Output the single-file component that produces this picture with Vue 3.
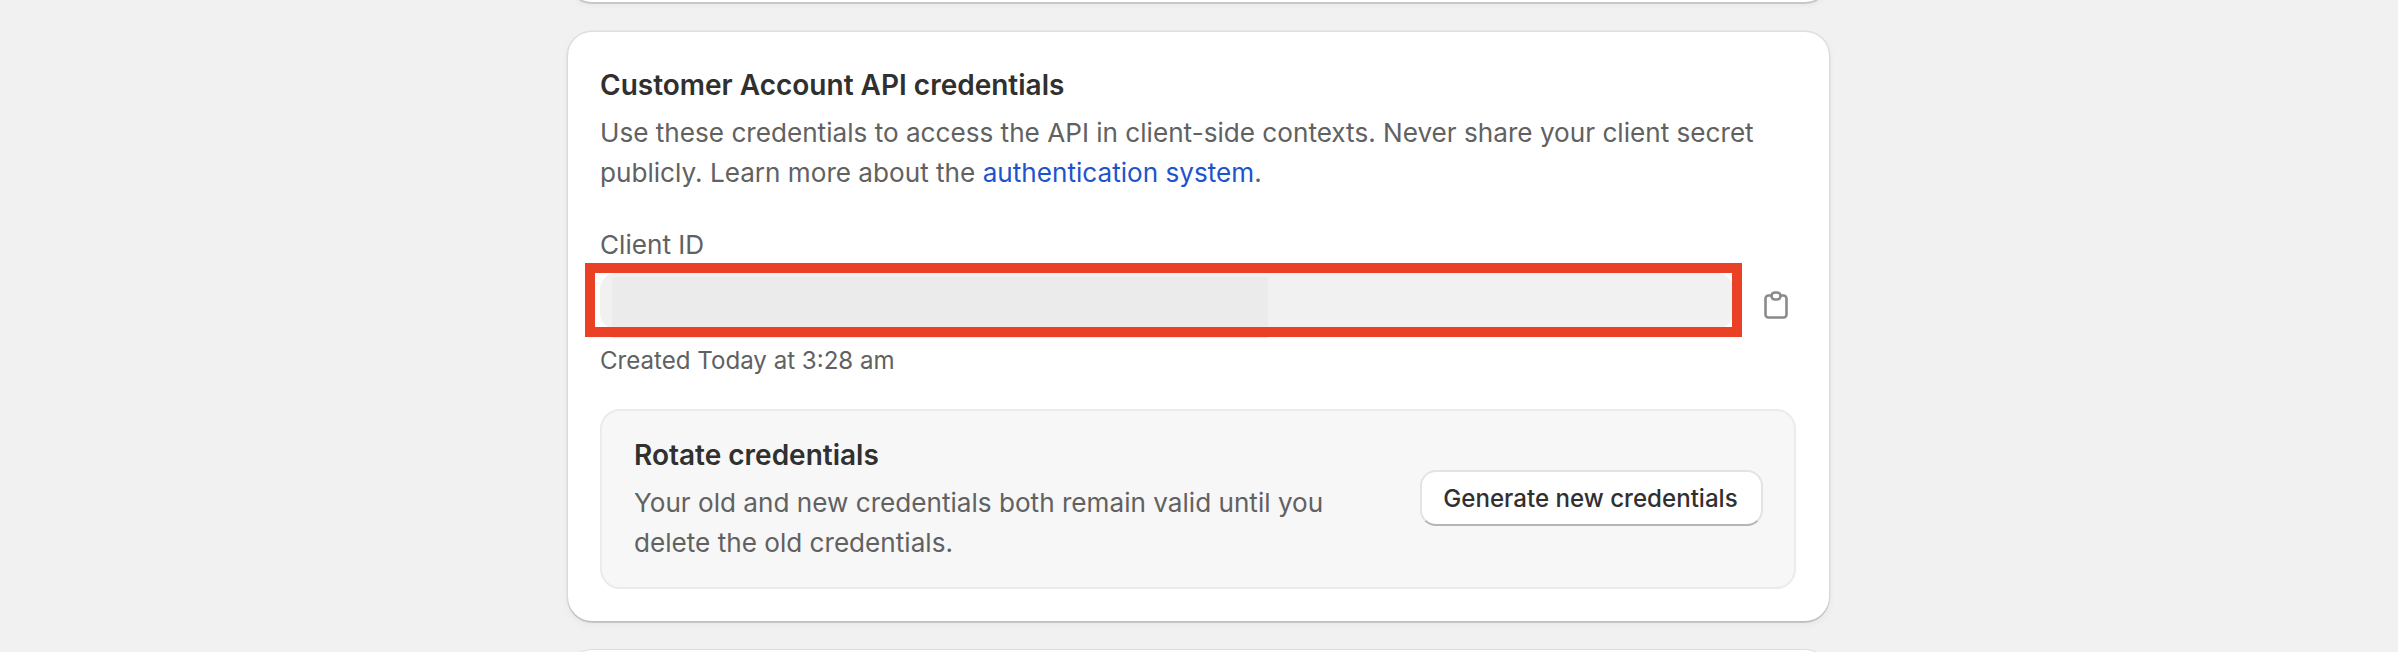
<script setup>
const heading = 'Customer Account API credentials'
</script>

<template>
  <main class="page">
    <div class="stub stub-top"></div>

    <section class="card">
      <h2 class="title">{{ heading }}</h2>
      <p class="body">
        Use these credentials to access the API in client-side contexts. Never share your client secret
        publicly. Learn more about the <a class="link" href="#">authentication system</a>.
      </p>

      <div class="field-block">
        <div class="label">Client ID</div>
        <div class="field-row">
          <div class="field">
            <div class="value-mask"></div>
            <div class="redaction"></div>
          </div>
          <svg class="copy" width="24" height="28" viewBox="0 0 24 28" fill="none" stroke="#8a8a8a" stroke-width="2.6">
            <path d="M7.5 4.5H4.5a3 3 0 0 0-3 3v16a3 3 0 0 0 3 3h15a3 3 0 0 0 3-3v-16a3 3 0 0 0-3-3h-3" />
            <rect x="7.5" y="1.5" width="9" height="7" rx="3.5" />
          </svg>
        </div>
        <div class="help">Created Today at 3:28 am</div>
      </div>

      <div class="rotate">
        <div class="rotate-text">
          <h3 class="title">Rotate credentials</h3>
          <p class="body">Your old and new credentials both remain valid until you delete the old credentials.</p>
        </div>
        <button class="btn" type="button">Generate new credentials</button>
      </div>
    </section>

    <div class="stub stub-bottom"></div>
  </main>
</template>

<style>
html, body { margin: 0; background: #f1f1f1; overflow: hidden; }
</style>

<style scoped>
.page {
  width: 1261px;
  height: 652px;
  padding: 0 6px;
  margin-left: 562px;
  display: flex;
  flex-direction: column;
  gap: 30px;
  font-family: Inter, "Liberation Sans", sans-serif;
  color: #303030;
  overflow: hidden;
}
.stub {
  flex: none;
  background: #fff;
}
.stub-top {
  height: 26px;
  margin-top: -24px;
  border-radius: 0 0 24px 24px;
  box-shadow: 0 2px 0 rgba(0, 0, 0, 0.14), 0 3px 6px rgba(0, 0, 0, 0.05);
}
.stub-bottom {
  height: 30px;
  margin-top: -1px;
  border-radius: 24px 24px 0 0;
  box-shadow: 0 -1px 0 rgba(0, 0, 0, 0.08);
}
.card {
  flex: none;
  box-sizing: border-box;
  height: 589px;
  padding: 32px 33px 32px 32px;
  background: #fff;
  border-radius: 24px;
  box-shadow: 0 2px 0 rgba(0, 0, 0, 0.11), 0 0 0 1.5px rgba(0, 0, 0, 0.07), 0 3px 8px rgba(0, 0, 0, 0.05);
}
.title {
  margin: 0 0 7px;
  font-size: 28px;
  line-height: 42px;
  font-weight: 600;
  color: #303030;
}
.body {
  margin: 0;
  font-size: 26.13px;
  line-height: 40px;
  font-weight: 400;
  color: #616161;
}
.link {
  color: #1f53cc;
  text-decoration: none;
}
.field-block {
  margin-top: 32px;
}
.label {
  font-size: 26.13px;
  line-height: 40px;
  color: #616161;
}
.help {
  font-size: 24.1px;
  line-height: 36px;
  margin-top: 14px;
  color: #616161;
}
.field-row {
  display: flex;
  align-items: center;
  gap: 31px;
  margin-top: 8px;
  padding-right: 8px;
}
.field {
  position: relative;
  flex: 1;
  height: 56px;
  background: #f1f1f1;
  border-radius: 16px;
}
.value-mask {
  position: absolute;
  left: 12px;
  top: 4px;
  bottom: -9px;
  width: 656px;
  background: #ebebeb;
}
.redaction {
  position: absolute;
  left: -15px;
  right: -9px;
  top: -10px;
  bottom: -8px;
  border: 10px solid #ea4025;
}
.copy {
  flex: none;
  display: block;
  margin-top: 8px;
}
.rotate {
  margin-top: 30px;
  box-sizing: border-box;
  height: 180px;
  padding: 0 31px 2px 32px;
  display: flex;
  align-items: center;
  justify-content: space-between;
  background: #f7f7f7;
  border: 2px solid #ebebeb;
  border-radius: 20px;
}
.rotate-text {
  width: 720px;
}
.btn {
  flex: none;
  box-sizing: border-box;
  height: 56px;
  width: 343px;
  padding: 0 2px 0 0;
  font-family: inherit;
  font-size: 24.1px;
  font-weight: 500;
  color: #303030;
  background: #fff;
  border: 2px solid #e3e3e3;
  border-bottom-color: #b5b5b5;
  border-radius: 16px;
}
</style>
